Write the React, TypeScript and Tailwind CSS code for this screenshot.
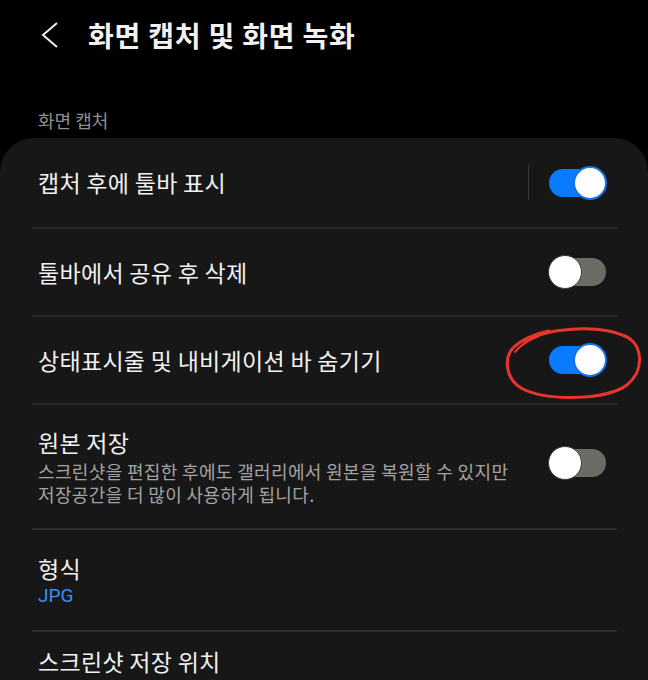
import React from 'react'

const font = { fontFamily: '"Noto Sans CJK KR", "Noto Sans", sans-serif' }

function Toggle({ on }: { on: boolean }) {
  return (
    <div className={`relative w-[57px] h-[28px] rounded-full ${on ? 'bg-[#0a7bff]' : 'bg-[#6c6c67]'}`}>
      {on ? (
        <div className="absolute right-[-1px] top-[-3px] w-[34px] h-[34px] rounded-full bg-white border-2 border-[#1673e6]" />
      ) : (
        <div className="absolute left-[-1px] top-[-3px] w-[34px] h-[34px] rounded-full bg-white border border-[#3a3a3a]" />
      )}
    </div>
  )
}

function Divider() {
  return <div className="h-[2px] ml-[32px] mr-[31px] bg-[#2b2b2b]" />
}

function RedCircle() {
  return (
    <svg
      className="absolute left-[505px] top-[5px]"
      width="138"
      height="80"
      viewBox="0 0 138 80"
      fill="none"
    >
      <path
        d="M20 20 C 40 6, 92 2, 120 14 C 138 22, 140 48, 122 63 C 102 78, 42 80, 16 66 C 0 56, -1 36, 8 26 C 16 18, 30 12, 44 9"
        stroke="#e8352c"
        strokeWidth="3"
        strokeLinecap="round"
      />
      <path d="M10 30 C 16 22, 24 18, 34 14" stroke="#e8352c" strokeWidth="2" strokeLinecap="round" />
    </svg>
  )
}

export default function App() {
  return (
    <div className="w-[648px] h-[680px] overflow-hidden bg-black text-[#f1f1f1]" style={font}>
      <header className="h-[70px] flex items-center">
        <svg className="ml-[41px]" width="18" height="28" viewBox="0 0 18 28" fill="none">
          <polyline points="16,2 2,14 16,26" stroke="#ededed" strokeWidth="2" strokeLinejoin="miter" />
        </svg>
        <h1 className="ml-[29px] text-[28px] font-bold tracking-[0.8px]">화면 캡처 및 화면 녹화</h1>
      </header>

      <div className="mt-[38px] px-[38px] text-[18px] leading-[24px] text-[#8f8f8f]">화면 캡처</div>

      <div className="mt-[6px] bg-[#171717] rounded-t-[34px]">
        <div className="h-[89px] flex items-center pl-[38px] pr-[42px]">
          <span className="flex-1 text-[23px] tracking-[0.3px]">캡처 후에 툴바 표시</span>
          <div className="w-px h-[35px] bg-[#3a3a3a] mr-[20px]" />
          <Toggle on />
        </div>
        <Divider />
        <div className="h-[86px] flex items-center pl-[38px] pr-[42px]">
          <span className="flex-1 text-[23px] tracking-[0.3px]">툴바에서 공유 후 삭제</span>
          <Toggle on={false} />
        </div>
        <Divider />
        <div className="relative h-[86px] flex items-center pl-[38px] pr-[42px]">
          <span className="flex-1 text-[23px] tracking-[0.3px]">상태표시줄 및 내비게이션 바 숨기기</span>
          <Toggle on />
          <RedCircle />
        </div>
        <Divider />
        <div className="h-[123px] flex items-center pl-[38px] pr-[42px]">
          <div className="flex-1">
            <div className="text-[23px] leading-[28px] tracking-[0.3px]">원본 저장</div>
            <div className="mt-[4px] text-[18px] leading-[23px] tracking-[0.35px] text-[#a3a3a3]">
              스크린샷을 편집한 후에도 갤러리에서 원본을 복원할 수 있지만
              <br />
              저장공간을 더 많이 사용하게 됩니다.
            </div>
          </div>
          <div className="mb-[8px]">
            <Toggle on={false} />
          </div>
        </div>
        <Divider />
        <div className="h-[100px] pt-[24px] pl-[38px]">
          <div className="text-[23px] leading-[28px] tracking-[0.3px]">형식</div>
          <div className="mt-[2px] text-[19px] leading-[24px] text-[#3d8ef5]" style={{ fontFamily: 'Roboto, sans-serif' }}>
            JPG
          </div>
        </div>
        <Divider />
        <div className="h-[60px] pt-[15px] pl-[38px]">
          <div className="text-[23px] leading-[28px] tracking-[0.3px]">스크린샷 저장 위치</div>
        </div>
      </div>
    </div>
  )
}
